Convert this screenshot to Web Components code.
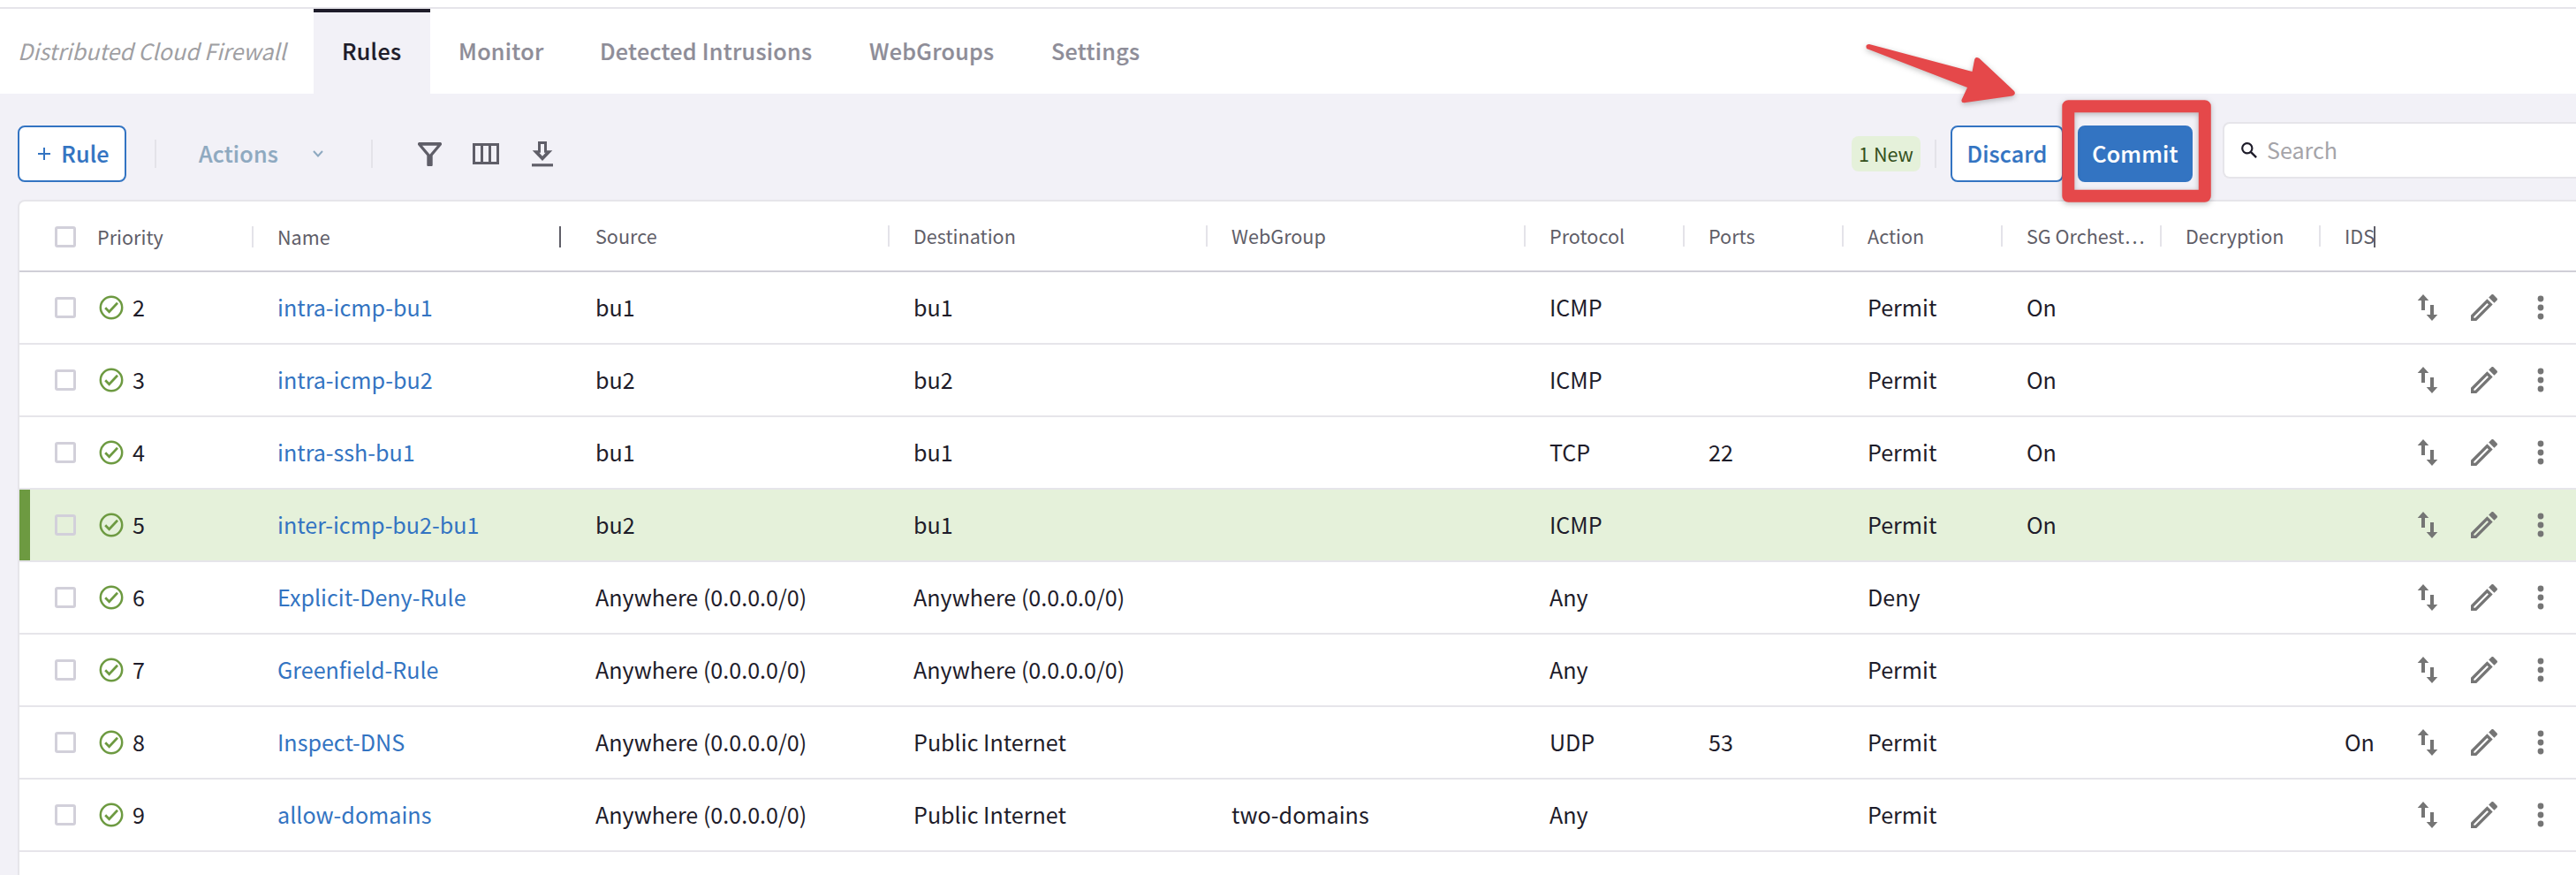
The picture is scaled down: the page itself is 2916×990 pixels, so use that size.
<!DOCTYPE html>
<html lang="en"><head><meta charset="utf-8"><title>Distributed Cloud Firewall</title>
<style>
html,body{margin:0;background:#f2f1f7}
body{font-family:"Noto Sans CJK SC","Noto Sans",sans-serif;color:#1e1c2a;width:2916px;height:990px;overflow:hidden}
</style></head><body>
<fw-app></fw-app>
<script>
const define=(name,html,setup)=>customElements.define(name,class extends HTMLElement{
  constructor(){super();this.attachShadow({mode:'open'}).innerHTML=html;}
  connectedCallback(){if(setup)setup(this,this.shadowRoot);}
});

// name: width, height, markup
const ICONS={
  filter:[27,27,'<path fill="#5f5e68" fill-rule="evenodd" d="M1 0h25l1 1.2v1.6L16.7 15v11.3l-.7.7h-5l-.7-.7V15L0 2.800V1.200zM5 3.700h17L13.500 13.700z"/>'],
  columns:[30,24,'<path d="M1.500 1.500h27v21h-27zM10.500 1.500v21M19.500 1.500v21" fill="none" stroke="#5f5e68" stroke-width="3"/>'],
  download:[24,29,'<path fill="#5f5e68" fill-rule="evenodd" d="M7 0h10v10.200h6.300L12 22 .7 10.200H7zM10 3v9.800H8.400L12 16.800l3.600-4H14V3z"/><path d="M0 26.800h24" stroke="#5f5e68" stroke-width="3.200"/>'],
  chevron:[12,8,'<path d="M1 1l5 5.500L11 1" fill="none" stroke="#8ea9c0" stroke-width="2"/>'],
  search:[18,18,'<circle cx="6.800" cy="6.800" r="5.600" fill="none" stroke="#1e1c2a" stroke-width="2.200"/><path d="M10.800 10.800l6.300 6.300" stroke="#1e1c2a" stroke-width="2.400"/>'],
  plus:[14,14,'<path d="M7 0v14M0 7h14" stroke="#3374c2" stroke-width="2"/>'],
  check:[28,28,'<circle cx="14" cy="14" r="12.200" fill="none" stroke="#6d9a41" stroke-width="2.500"/><path d="M7.200 14.200l4.400 4.500L21 8.800" fill="none" stroke="#6d9a41" stroke-width="2.700"/>'],
  swap:[24,30,'<path d="M5 18V7H.7L7 0l6.300 7H9v11zM15 12h4v11h4.300L17 30l-6.300-7H15z" fill="#757575"/>'],
  pencil:[30,30,'<path transform="translate(-5 -5) scale(1.667)" fill="#757575" d="M14.06 9.02l.92.92L5.92 19H5v-.92l9.06-9.06M17.66 3c-.25 0-.51.1-.7.29l-1.83 1.83 3.75 3.75 1.83-1.83c.39-.39.39-1.02 0-1.41l-2.34-2.34c-.2-.2-.45-.29-.71-.29zm-3.6 3.190L3 17.25V21h3.75L17.81 9.940l-3.75-3.75z"/>'],
  dots:[8,28,'<g fill="#757575"><circle cx="4" cy="4" r="3.400"/><circle cx="4" cy="14" r="3.400"/><circle cx="4" cy="24" r="3.400"/></g>']
};
define('fw-icon','<style>:host{display:block;flex:none}svg{display:block;overflow:visible}</style>',(h,r)=>{
  const [w,t,p]=ICONS[h.getAttribute('name')];
  r.innerHTML+=`<svg width="${w}" height="${t}" viewBox="0 0 ${w} ${t}">${p}</svg>`;
});

define('fw-tab',`<style>
:host{display:flex;align-items:center;box-sizing:border-box;height:96px;padding:0 32px 2px;font-size:25.1px;font-weight:500;letter-spacing:.3px;-webkit-text-stroke:.2px;color:#8e8d98;white-space:nowrap}
:host([active]){background:#f2f1f7;color:#1e1c2a;border-top:4px solid #1e1c2a;padding-bottom:6px}
</style><slot></slot>`);

define('fw-tabs',`<style>
:host{display:flex;height:96px;border-top:2px solid #e6e5ea;margin-top:8px}
.t{display:flex;align-items:center;box-sizing:border-box;width:335px;padding:0 0 2px 20px;flex:none;margin-right:20px;font-size:25.1px;font-style:italic;color:#a09fa3;white-space:nowrap}
</style><span class="t"><slot name="title"></slot></span><slot></slot>`);

define('fw-button',`<style>
:host{display:flex;align-items:center;justify-content:center;gap:12px;box-sizing:border-box;height:64px;border:2px solid #3374c2;border-radius:8px;background:#fff;color:#3374c2;font-size:25.1px;font-weight:500;letter-spacing:.2px;white-space:nowrap;flex:none}
:host([primary]){background:#3374c2;color:#fff}
.l{padding-bottom:2px;-webkit-text-stroke:.2px}
</style><slot name="icon"></slot><span class="l"><slot></slot></span>`);

define('fw-toolbar',`<style>
:host{display:flex;align-items:center;height:120px;box-sizing:border-box;padding:16px 0 0 20px}
.sep{width:2px;height:32px;background:#e4e3e9;flex:none}
.act{display:flex;align-items:center;font-size:25.1px;font-weight:500;letter-spacing:.2px;color:#8ea9c0;margin-left:48px;width:195px}
.act span{padding-bottom:2px;-webkit-text-stroke:.2px}
.act fw-icon{margin:0 54px 0 auto}
.badge{display:flex;align-items:center;justify-content:center;box-sizing:border-box;width:78px;height:40px;padding-bottom:1px;border-radius:8px;background:#e5f1da;color:#34501c;font-size:21.6px;margin-right:16px;white-space:nowrap}
.search{display:flex;align-items:center;box-sizing:border-box;width:400px;height:64px;border:2px solid #e6e5ea;border-right:0;border-radius:8px 0 0 8px;background:#fff;margin:-8px 0 0 34px;padding-left:19px;gap:11px;font-size:25.1px;color:#a5a4a9}
.search span{padding-bottom:2px}
.sp{flex:1}
</style>
<fw-button style="width:123px;padding-left:4px"><fw-icon slot="icon" name="plus"></fw-icon>Rule</fw-button>
<i class="sep" style="margin-left:32px"></i>
<span class="act"><span>Actions</span><fw-icon name="chevron"></fw-icon></span>
<i class="sep"></i>
<fw-icon name="filter" style="margin-left:51px"></fw-icon>
<fw-icon name="columns" style="margin-left:35px"></fw-icon>
<fw-icon name="download" style="margin-left:37px"></fw-icon>
<i class="sp"></i>
<span class="badge">1 New</span><i class="sep"></i>
<fw-button style="width:128px;margin-left:16px">Discard</fw-button>
<fw-button primary style="width:130px;margin-left:16px">Commit</fw-button>
<label class="search"><fw-icon name="search"></fw-icon><span>Search</span></label>`);

const COLS='292px 360px 360px 360px 360px 180px 180px 180px 180px 180px 1fr';
define('fw-check-box',`<style>:host{display:block;box-sizing:border-box;width:24px;height:24px;border:3px solid #d2d0da;border-radius:3px;flex:none}</style>`);

define('fw-head',`<style>
:host{display:grid;grid-template-columns:${COLS};height:78px;border-bottom:2px solid #d0cfd7;font-size:21.6px;color:#5f5e68}
div{display:flex;align-items:center;position:relative;padding-bottom:1px;white-space:nowrap}
div+div::before{content:"";position:absolute;left:-29px;top:27px;width:2px;height:24px;background:#e4e3e9}
.p{padding:2px 0 0}
.p span{padding-bottom:1px}
.n{padding:1px 0 0}
div.n::before{top:28px}
div.d::before{background:#5f5e68;left:-41px;top:28px}
fw-check-box{margin:0 24px 0 40px}
.cur{width:2px;height:24px;background:#5f5e68;margin:3px 0 0 -1px}
</style>`,(h,r)=>{
  r.innerHTML+='<div class="p"><fw-check-box></fw-check-box><span>Priority</span></div>'+['Name','Source','Destination','WebGroup','Protocol','Ports','Action','SG Orchest…','Decryption','IDS'].map(c=>
  `<div${c==='Source'?' class="d"':c==='Name'?' class="n"':''}>${c}${c==='IDS'?'<i class="cur"></i>':''}</div>`).join('');
});

define('fw-row',`<style>
:host{display:grid;grid-template-columns:${COLS};height:80px;border-bottom:2px solid #e6e5ea;font-size:25.1px;color:#1e1c2a}
:host([new]){background:#e5f1da;box-shadow:inset 12px 0 #6d9a41}
div{display:flex;align-items:center;white-space:nowrap}
.x{padding-bottom:2px}
fw-check-box{margin:0 26px 0 40px}
.n{color:#3374c2}
.p fw-icon{margin-right:10px}
.last{justify-content:space-between;padding-right:36px}
.tools{display:flex;align-items:center}
</style>`,(h,r)=>{
  const v=h.getAttribute('cells').split('|');
  r.innerHTML+=`<div class="p"><fw-check-box></fw-check-box><fw-icon name="check"></fw-icon><span class="x">${v[0]}</span></div><div class="n"><span class="x">${v[1]}</span></div>`+
  v.slice(2,10).map(c=>`<div><span class="x">${c}</span></div>`).join('')+
  `<div class="last"><span class="x">${v[10]||''}</span><span class="tools"><fw-icon name="swap"></fw-icon><fw-icon name="pencil" style="margin-left:37px"></fw-icon><fw-icon name="dots" style="margin-left:45px"></fw-icon></span></div>`;
});

define('fw-annotation',`<style>:host{display:block;position:absolute;left:2100px;top:40px;pointer-events:none}svg{display:block;overflow:visible;filter:drop-shadow(0 2px 3px rgba(0,0,0,.25))}</style>
<svg width="420" height="200" viewBox="2100 40 420 200"><path d="M2116 50Q2111 50 2113 55L2227 99L2220.500 113Q2220 117 2225 116L2278 108.500Q2282.500 107 2280 103L2240.500 66Q2236 63 2235 68L2232.500 81Z" fill="#e5484a"/><rect x="2341.300" y="120.300" width="154.500" height="101.500" fill="none" stroke="#e5484a" stroke-width="14" stroke-linejoin="round"/></svg>`);

define('fw-app',`<style>
:host{display:block;position:relative;height:990px;overflow:hidden}
.top{display:flow-root;background:#fff}
.table{display:block;box-sizing:border-box;height:770px;margin-left:20px;border:2px solid #e6e5ea;border-right:0;border-bottom:0;border-radius:8px 0 0 0;background:#fff;overflow:hidden}
</style>
<div class="top"><fw-tabs><span slot="title">Distributed Cloud Firewall</span></fw-tabs></div>
<fw-toolbar></fw-toolbar>
<div class="table"><fw-head></fw-head></div>
<fw-annotation></fw-annotation>`,(h,r)=>{
  const tabs=r.querySelector('fw-tabs');
  [['Rules',132],['Monitor',160],['Detected Intrusions',305],['WebGroups',206],['Settings',164]].forEach(([t,w],i)=>{
    const e=document.createElement('fw-tab');e.textContent=t;e.style.width=w+'px';if(!i)e.setAttribute('active','');
    tabs.append(e);
  });
  const A='Anywhere (0.0.0.0/0)';
  ['2|intra-icmp-bu1|bu1|bu1||ICMP||Permit|On||','3|intra-icmp-bu2|bu2|bu2||ICMP||Permit|On||','4|intra-ssh-bu1|bu1|bu1||TCP|22|Permit|On||','5|inter-icmp-bu2-bu1|bu2|bu1||ICMP||Permit|On||',
  `6|Explicit-Deny-Rule|${A}|${A}||Any||Deny|||`,`7|Greenfield-Rule|${A}|${A}||Any||Permit|||`,`8|Inspect-DNS|${A}|Public Internet||UDP|53|Permit|||On`,`9|allow-domains|${A}|Public Internet|two-domains|Any||Permit|||`].forEach((c,i)=>{
    const e=document.createElement('fw-row');e.setAttribute('cells',c);if(i===3)e.setAttribute('new','');
    r.querySelector('.table').append(e);
  });
});
</script></body></html>
